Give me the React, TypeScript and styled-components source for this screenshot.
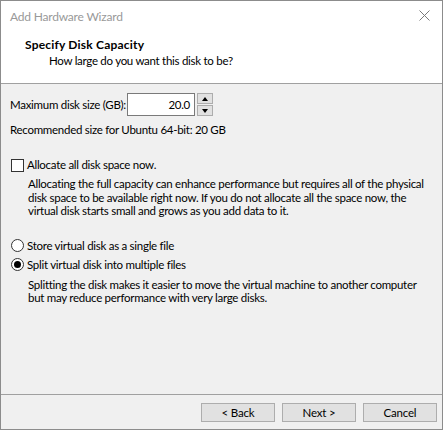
import React from "react";
import styled, { createGlobalStyle } from "styled-components";

const Global = createGlobalStyle`
  html, body { margin: 0; padding: 0; background: #ffffff; }
  * { box-sizing: border-box; }
  body { font-family: Lato, "Noto Sans", sans-serif; font-size: 11.5px; letter-spacing: -0.28px; color: #000; }
`;

const Window = styled.div`
  width: 443px;
  height: 430px;
  border: 1px solid #8c8c8c;
  background: #f0f0f0;
  display: flex;
  flex-direction: column;
  white-space: nowrap;
`;

const TitleBar = styled.div`
  height: 30px;
  background: #fff;
  display: flex;
  align-items: center;
  justify-content: space-between;
  padding: 0 9px 0 9px;
  color: #999;
  font-size: 12px;
  letter-spacing: -0.2px;
`;

const Close = styled.svg`
  width: 11px;
  height: 11px;
  margin-right: 3px;
  margin-top: -2px;
`;

const Header = styled.div`
  height: 53px;
  background: #fff;
  border-bottom: 1px solid #a0a0a0;
  padding: 6px 0 0 24px;
  line-height: 16px;
`;

const HeaderTitle = styled.div`
  font-weight: bold;
  font-size: 12px;
  letter-spacing: 0.2px;
`;

const HeaderSub = styled.div`
  padding-left: 24px;
`;

const Body = styled.div`
  flex: 1;
  padding: 9px 9px 0 9px;
  line-height: 16px;
`;

const SizeRow = styled.div`
  display: flex;
  align-items: center;
  height: 23px;
`;

const SizeLabel = styled.span`
  width: 117px;
  flex-shrink: 0;
`;

const NumberBox = styled.div`
  width: 68px;
  height: 23px;
  background: #fff;
  border: 1px solid #7a7a7a;
  text-align: right;
  padding: 3px 4px 0 0;
`;

const Spinner = styled.div`
  margin-left: 2px;
  width: 16px;
  height: 23px;
  display: flex;
  flex-direction: column;
  gap: 1px;
`;

const SpinButton = styled.div`
  flex: 1;
  border: 1px solid #adadad;
  background: #e1e1e1;
  display: flex;
  align-items: center;
  justify-content: center;
`;

const Arrow = styled.div<{ $down?: boolean }>`
  width: 0;
  height: 0;
  border-left: 3.5px solid transparent;
  border-right: 3.5px solid transparent;
  ${(p) => (p.$down ? "border-top: 4px solid #000;" : "border-bottom: 4px solid #000;")}
`;

const Line = styled.div<{ $mt?: number }>`
  margin-top: ${(p) => p.$mt ?? 0}px;
`;

const OptionRow = styled.label<{ $mt?: number }>`
  display: flex;
  align-items: center;
  gap: 3px;
  margin-top: ${(p) => p.$mt ?? 0}px;
  height: 16px;
`;

const CheckBox = styled.span`
  width: 13px;
  height: 13px;
  border: 1px solid #333;
  background: #fff;
  margin-left: 1px;
`;

const Radio = styled.span<{ $on?: boolean }>`
  width: 13px;
  height: 13px;
  border-radius: 50%;
  border: 1px solid #333;
  background: #fff;
  margin-left: 1px;
  display: flex;
  align-items: center;
  justify-content: center;
  &::after {
    content: "";
    display: ${(p) => (p.$on ? "block" : "none")};
    width: 7px;
    height: 7px;
    border-radius: 50%;
    background: #000;
  }
`;

const Desc = styled.p<{ $mt?: number }>`
  margin: ${(p) => p.$mt ?? 0}px 0 0 18px;
  line-height: 13.5px;
`;

const Footer = styled.div`
  height: 35px;
  border-top: 1px solid #a0a0a0;
  display: flex;
  justify-content: flex-end;
  gap: 7px;
  padding: 8px 5px 0 0;
`;

const Button = styled.button`
  width: 74px;
  height: 19px;
  border: 1px solid #adadad;
  background: #e1e1e1;
  font-family: inherit;
  font-size: 11.5px;
  letter-spacing: -0.2px;
  color: #000;
  padding: 0;
  line-height: 16px;
`;

export default function App() {
  return (
    <>
      <Global />
      <Window>
        <TitleBar>
          <span>Add Hardware Wizard</span>
          <Close viewBox="0 0 11 11">
            <path d="M0.5 0.5 L10.5 10.5 M10.5 0.5 L0.5 10.5" stroke="#7a7a7a" strokeWidth="1" />
          </Close>
        </TitleBar>
        <Header>
          <HeaderTitle>Specify Disk Capacity</HeaderTitle>
          <HeaderSub>How large do you want this disk to be?</HeaderSub>
        </Header>
        <Body>
          <SizeRow>
            <SizeLabel>Maximum disk size (GB):</SizeLabel>
            <NumberBox>20.0</NumberBox>
            <Spinner>
              <SpinButton><Arrow /></SpinButton>
              <SpinButton><Arrow $down /></SpinButton>
            </Spinner>
          </SizeRow>
          <Line $mt={6}>Recommended size for Ubuntu 64-bit: 20 GB</Line>
          <OptionRow $mt={19}>
            <CheckBox />
            Allocate all disk space now.
          </OptionRow>
          <Desc $mt={4}>
            Allocating the full capacity can enhance performance but requires all of the physical
            <br />
            disk space to be available right now. If you do not allocate all the space now, the
            <br />
            virtual disk starts small and grows as you add data to it.
          </Desc>
          <OptionRow $mt={20}>
            <Radio />
            Store virtual disk as a single file
          </OptionRow>
          <OptionRow $mt={3}>
            <Radio $on />
            Split virtual disk into multiple files
          </OptionRow>
          <Desc $mt={5}>
            Splitting the disk makes it easier to move the virtual machine to another computer
            <br />
            but may reduce performance with very large disks.
          </Desc>
        </Body>
        <Footer>
          <Button>&lt; Back</Button>
          <Button>Next &gt;</Button>
          <Button>Cancel</Button>
        </Footer>
      </Window>
    </>
  );
}
